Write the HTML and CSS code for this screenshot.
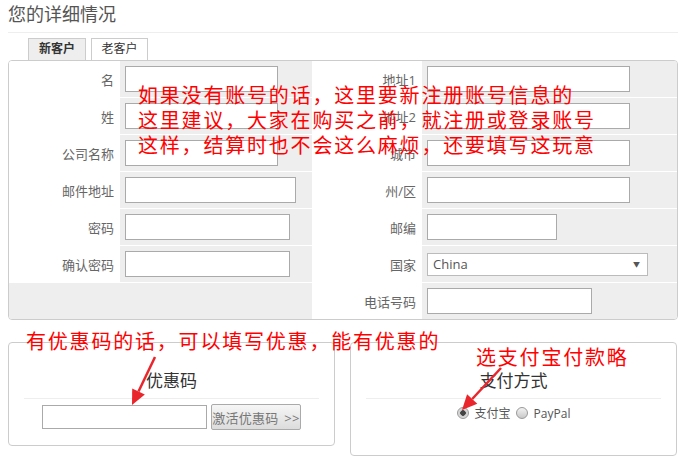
FILE: index.html
```html
<!DOCTYPE html>
<html lang="zh-CN">
<head>
  <meta charset="UTF-8" />
  <title>结算 - 您的详细情况</title>
  <link rel="stylesheet" href="styles.css">
</head>
<body>

<div class="page">
  <h2 class="title">您的详细情况</h2>

  <div class="tabs">
    <span class="tab active">新客户</span>
    <span class="tab">老客户</span>
  </div>

  <!-- 新客户注册信息 -->
  <div class="details">
    <table class="form-table">
      <colgroup>
        <col style="width:111px"><col style="width:192px"><col style="width:110px"><col style="width:255px">
      </colgroup>
      <tr>
        <td class="lbl">名</td><td class="fld"><input class="w153"></td>
        <td class="lbl">地址1</td><td class="fld"><input class="w203"></td>
      </tr>
      <tr>
        <td class="lbl">姓</td><td class="fld"><input class="w153"></td>
        <td class="lbl">地址2</td><td class="fld"><input class="w203"></td>
      </tr>
      <tr>
        <td class="lbl">公司名称</td><td class="fld"><input class="w153"></td>
        <td class="lbl">城市</td><td class="fld"><input class="w203"></td>
      </tr>
      <tr>
        <td class="lbl">邮件地址</td><td class="fld"><input class="w171"></td>
        <td class="lbl">州/区</td><td class="fld"><input class="w203"></td>
      </tr>
      <tr>
        <td class="lbl">密码</td><td class="fld"><input type="password" class="w165"></td>
        <td class="lbl">邮编</td><td class="fld"><input class="w130"></td>
      </tr>
      <tr>
        <td class="lbl">确认密码</td><td class="fld"><input type="password" class="w165"></td>
        <td class="lbl">国家</td>
        <td class="fld">
          <span class="select-wrap">
            <select class="country">
              <option>China</option>
            </select>
          </span>
        </td>
      </tr>
      <tr>
        <td class="fld" colspan="2"></td>
        <td class="lbl">电话号码</td><td class="fld"><input class="w165"></td>
      </tr>
    </table>
  </div>

  <!-- 优惠码 / 支付方式 -->
  <div class="boxes">
    <div class="box coupon">
      <h3>优惠码</h3>
      <div class="coupon-row">
        <input class="coupon-input">
        <button class="btn">激活优惠码 &gt;&gt;</button>
      </div>
    </div>
    <div class="box payment">
      <h3>支付方式</h3>
      <div class="pay-row">
        <label><input type="radio" name="pay" checked>支付宝</label>
        <label><input type="radio" name="pay"><span class="latin">PayPal</span></label>
      </div>
    </div>
  </div>
</div>

<!-- 批注 -->
<div class="note note-1">如果没有账号的话，这里要新注册账号信息的<br>这里建议，大家在购买之前，就注册或登录账号<br>这样，结算时也不会这么麻烦，还要填写这玩意</div>
<div class="note note-2">有优惠码的话，可以填写优惠，能有优惠的</div>
<div class="note note-3">选支付宝付款略</div>

<svg class="arrows" width="688" height="466" viewBox="0 0 688 466">
  <line x1="155" y1="357" x2="138.5" y2="391.5" />
  <polygon points="132,405 144.8,394.5 132.2,388.5" />
  <line x1="501" y1="368" x2="472.2" y2="399" />
  <polygon points="462,410 477.3,403.8 467.1,394.2" />
</svg>

</body>
</html>
```

FILE: styles.css
```css
body {
  margin: 0;
  font-family: "Open Sans", "Noto Sans CJK SC", sans-serif;
  font-size: 13px;
  color: #666;
  background: #fff;
  position: relative;
}

.page {
  width: 670px;
  padding: 0 8px;
}

.title {
  margin: 0;
  padding: 2px 0 6px;
  font-size: 18px;
  line-height: 24px;
  font-weight: normal;
  color: #555;
  border-bottom: 1px solid #eee;
}

.tabs {
  display: flex;
  gap: 5px;
  margin: 5px 0 0 20px;
}

.tab {
  box-sizing: border-box;
  height: 22px;
  width: 57px;
  border: 1px solid #ccc;
  border-bottom: none;
  background: #fff;
  color: #333;
  font-size: 12px;
  line-height: 20px;
  text-align: center;
}

.tab.active {
  width: 58px;
  background: #eee;
  font-weight: bold;
}

.details {
  border: 1px solid #ccc;
  border-radius: 4px;
  overflow: hidden;
}

.form-table {
  width: 668px;
  table-layout: fixed;
  border-collapse: separate;
  border-spacing: 0;
}

.form-table td {
  height: 36px;
  padding: 0;
  border-bottom: 1px solid #fff;
  vertical-align: middle;
}

.form-table tr:last-child td {
  border-bottom: none;
}

.lbl {
  background: #fff;
  text-align: right;
  padding-right: 6px !important;
  color: #666;
}

.fld {
  background: #eee;
}

.fld input {
  box-sizing: border-box;
  height: 26px;
  margin: 0 0 0 5px;
  border: 1px solid #aaa;
  background: #fff;
  vertical-align: middle;
}

.w130 { width: 130px; }
.w153 { width: 153px; }
.w165 { width: 165px; }
.w171 { width: 171px; }
.w203 { width: 203px; }

.select-wrap {
  position: relative;
  display: inline-block;
  margin-left: 5px;
  vertical-align: middle;
}

.select-wrap::after {
  content: "▼";
  position: absolute;
  right: 8px;
  top: 6px;
  font-size: 7px;
  color: #555;
  pointer-events: none;
}

.country {
  appearance: none;
  box-sizing: border-box;
  width: 221px;
  height: 23px;
  padding: 0 5px;
  border: 1px solid #bbb;
  background: #fff;
  font-family: "Open Sans", sans-serif;
  font-size: 13px;
  color: #555;
}

.boxes {
  display: flex;
  gap: 15px;
  align-items: flex-start;
  margin-top: 22px;
}

.box {
  box-sizing: border-box;
  width: 327px;
  border: 1px solid #ccc;
  border-radius: 4px;
  padding: 0 15px;
}

.coupon { height: 104px; }
.payment { height: 114px; }

.box h3 {
  margin: 26px 0 0;
  padding-bottom: 5px;
  font-size: 17px;
  line-height: 24px;
  font-weight: normal;
  text-align: center;
  color: #333;
  border-bottom: 1px solid #eee;
}

.coupon-row {
  display: flex;
  align-items: center;
  gap: 4px;
  margin: 5px 0 0 18px;
}

.coupon-input {
  box-sizing: border-box;
  width: 165px;
  height: 24px;
  border: 1px solid #aaa;
}

.btn {
  box-sizing: border-box;
  height: 26px;
  width: 90px;
  padding: 0;
  border: 1px solid #aaa;
  border-radius: 2px;
  background: linear-gradient(#f6f6f6, #dcdcdc);
  color: #777;
  font-family: "Open Sans", "Noto Sans CJK SC", sans-serif;
  font-size: 13px;
  word-spacing: 2px;
  letter-spacing: 0.3px;
}

.pay-row {
  display: flex;
  justify-content: center;
  gap: 5px;
  margin-top: 5px;
  font-size: 12px;
  color: #555;
}

.pay-row label {
  display: flex;
  align-items: center;
  gap: 6px;
}

.pay-row input {
  appearance: none;
  width: 12px;
  height: 12px;
  margin: 0;
  border: 1px solid #999;
  border-radius: 50%;
  background: linear-gradient(#f2f2f2, #c8c8c8);
}

.pay-row input:checked {
  background: radial-gradient(circle, #444 0 2.5px, #ccc 3px, #e6e6e6 6px);
}

.latin {
  font-family: "Open Sans", sans-serif;
}

/* 红色批注 */
.note {
  position: absolute;
  font-family: "Noto Sans CJK SC", sans-serif;
  font-size: 20px;
  line-height: 25px;
  letter-spacing: 1.8px;
  color: #f00;
  white-space: nowrap;
}

.note-1 { left: 138px; top: 82px; }
.note-2 { left: 26px; top: 328px; }
.note-3 { left: 476px; top: 344px; }

.arrows {
  position: absolute;
  left: 0;
  top: 0;
  pointer-events: none;
}

.arrows line {
  stroke: #e8262c;
  stroke-width: 2.5;
}

.arrows polygon {
  fill: #e8262c;
}
```
